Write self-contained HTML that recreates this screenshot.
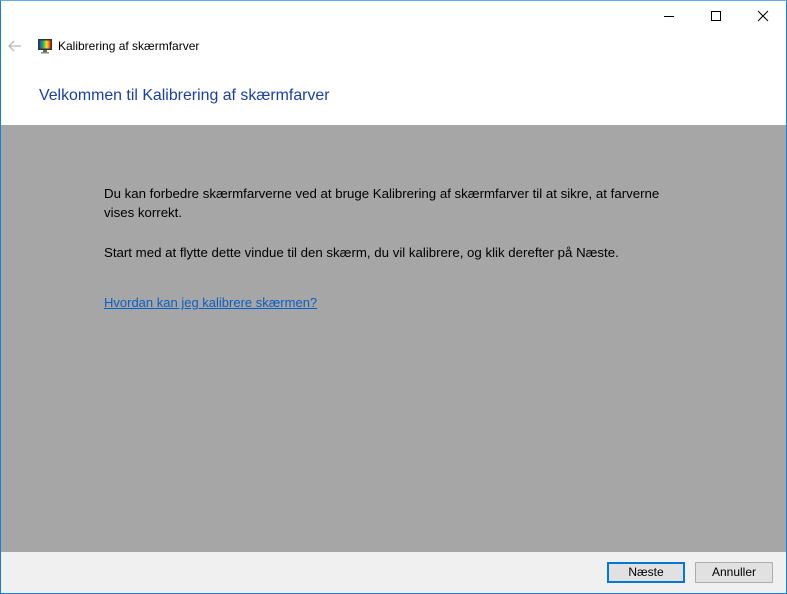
<!DOCTYPE html>
<html><head><meta charset="utf-8"><style>
*{margin:0;padding:0;box-sizing:border-box}
body{width:787px;height:594px;position:relative;background:#fff;font-family:"Liberation Sans",sans-serif;font-size:12px;color:#000;overflow:hidden}
.win{position:absolute;left:0;top:0;width:787px;height:594px;border:1px solid #1a7fd4;border-top:1px solid #6aa9e0}
.gray{position:absolute;left:1px;top:125px;width:785px;height:427px;background:#a6a6a6}
.foot{position:absolute;left:1px;top:552px;width:785px;height:41px;background:#f0f0f0}
.btn{position:absolute;top:562px;height:21px;width:78px;background:#e1e1e1;border:1px solid #adadad;text-align:center;line-height:19px;font-size:12px}
.t{position:absolute;white-space:nowrap}
.b{font-size:13.25px}
</style></head><body>
<div class="win"></div>
<div class="gray"></div>
<div class="foot"></div>
<div style="position:absolute;left:664px;top:16px;width:10px;height:1px;background:#000"></div>
<div style="position:absolute;left:711px;top:11px;width:10px;height:10px;border:1px solid #000"></div>
<svg style="position:absolute;left:757px;top:10px" width="12" height="12"><path d="M1 1L11 11M11 1L1 11" stroke="#000" stroke-width="1"/></svg>
<svg style="position:absolute;left:8px;top:40px" width="14" height="12"><path d="M1 6H13M6 1L1 6L6 11" stroke="#b8b8b8" stroke-width="1.3" fill="none"/></svg>
<svg style="position:absolute;left:37px;top:38px" width="16" height="16">
<defs><linearGradient id="g" x1="0" x2="1"><stop offset="0" stop-color="#2040ff"/><stop offset=".35" stop-color="#20c040"/><stop offset=".65" stop-color="#ffe020"/><stop offset="1" stop-color="#ff2020"/></linearGradient></defs>
<rect x="1" y="1" width="14" height="11" fill="#333"/><rect x="2.5" y="2.5" width="11" height="8" fill="url(#g)"/><rect x="6" y="12" width="4" height="2" fill="#666"/><rect x="4" y="14" width="8" height="1.5" fill="#888"/></svg>
<div class="t" style="left:58px;top:39px;font-size:12px">Kalibrering af skærmfarver</div>
<div class="t" style="left:39px;top:87px;font-size:15.9px;color:#1a3ea8">Velkommen til Kalibrering af skærmfarver</div>
<div class="t b" style="left:104px;top:184px;line-height:19px">Du kan forbedre skærmfarverne ved at bruge Kalibrering af skærmfarver til at sikre, at farverne<br>vises korrekt.</div>
<div class="t b" style="left:104px;top:245px">Start med at flytte dette vindue til den skærm, du vil kalibrere, og klik derefter på Næste.</div>
<div class="t" style="left:104px;top:295px;font-size:13px;color:#0a5fc4;text-decoration:underline">Hvordan kan jeg kalibrere skærmen?</div>
<div class="btn" style="left:607px;border:2px solid #0078d7;line-height:17px">Næste</div>
<div class="btn" style="left:695px">Annuller</div>
</body></html>
